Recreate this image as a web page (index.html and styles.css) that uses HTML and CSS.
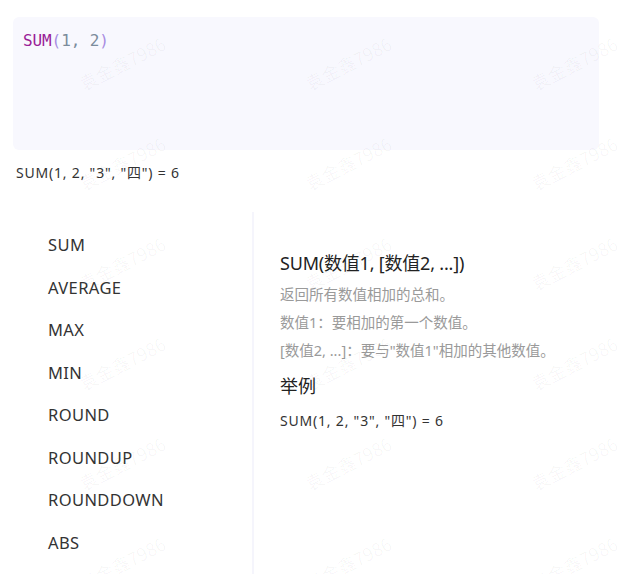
FILE: index.html
```html
<!DOCTYPE html>
<html lang="zh-CN">
<head>
<meta charset="utf-8">
<title>SUM</title>
<link rel="stylesheet" href="styles.css">
</head>
<body>
<div class="page">
  <div class="editor">
    <div class="code"><span class="fn">SUM</span><span class="paren">(</span><span class="arg">1, 2</span><span class="paren">)</span></div>
  </div>
  <div class="result">SUM(1, 2, "3", "四") = 6</div>
  <div class="panel">
    <ul class="fn-list">
      <li>SUM</li>
      <li>AVERAGE</li>
      <li>MAX</li>
      <li>MIN</li>
      <li>ROUND</li>
      <li>ROUNDUP</li>
      <li>ROUNDDOWN</li>
      <li>ABS</li>
    </ul>
    <div class="doc">
      <div class="doc-title">SUM(数值1, [数值2, ...])</div>
      <div class="doc-line first">返回所有数值相加的总和。</div>
      <div class="doc-line">数值1：要相加的第一个数值。</div>
      <div class="doc-line">[数值2, ...]：要与"数值1"相加的其他数值。</div>
      <div class="doc-sub">举例</div>
      <div class="doc-example">SUM(1, 2, "3", "四") = 6</div>
    </div>
  </div>
  <div class="watermark" aria-hidden="true">
    <span>袁金鑫7986</span><span>袁金鑫7986</span><span>袁金鑫7986</span>
    <span>袁金鑫7986</span><span>袁金鑫7986</span><span>袁金鑫7986</span>
    <span>袁金鑫7986</span><span>袁金鑫7986</span><span>袁金鑫7986</span>
    <span>袁金鑫7986</span><span>袁金鑫7986</span><span>袁金鑫7986</span>
    <span>袁金鑫7986</span><span>袁金鑫7986</span><span>袁金鑫7986</span>
    <span>袁金鑫7986</span><span>袁金鑫7986</span><span>袁金鑫7986</span>
  </div>
</div>
</body>
</html>
```

FILE: styles.css
```css
* { box-sizing: border-box; }
html, body {
  margin: 0;
  padding: 0;
  background: #ffffff;
}
body {
  font-family: "Noto Sans", "Noto Sans CJK SC", sans-serif;
  color: #333333;
  overflow: hidden;
}
.page {
  position: relative;
  width: 621px;
  height: 574px;
  overflow: hidden;
}
.editor {
  margin: 17px 22px 0 13px;
  height: 133px;
  background: #f8f8fe;
  border-radius: 6px;
  padding: 13px 0 0 10px;
}
.code {
  font-family: "DejaVu Sans Mono", monospace;
  font-size: 16px;
  line-height: 22px;
  letter-spacing: -0.1px;
}
.fn { color: #9a2197; }
.paren { color: #a98de2; }
.arg { color: #7b8c9c; }
.result {
  margin: 13px 0 0 16px;
  font-size: 14px;
  line-height: 20px;
  letter-spacing: 0.8px;
  color: #333333;
}
.panel {
  display: flex;
  margin-top: 29px;
  height: 400px;
}
.fn-list {
  list-style: none;
  margin: 0;
  padding: 12px 0 0 48px;
  width: 254px;
  border-right: 2px solid #f5f5fc;
}
.fn-list li {
  height: 42.5px;
  line-height: 42.5px;
  font-size: 16.5px;
  letter-spacing: 0.4px;
  color: #333333;
}
.doc {
  padding: 38px 0 0 26px;
}
.doc-title {
  font-size: 18px;
  line-height: 26px;
  color: #222222;
  letter-spacing: -0.2px;
}
.doc-line {
  font-size: 14.5px;
  line-height: 28px;
  color: #9a9a9a;
}
.doc-line.first { margin-top: 4px; }
.doc-sub {
  margin-top: 9px;
  font-size: 18px;
  line-height: 26px;
  color: #222222;
}
.doc-example {
  margin-top: 12px;
  font-size: 14px;
  line-height: 20px;
  letter-spacing: 0.8px;
  color: #333333;
}
.watermark {
  position: absolute;
  inset: 0;
  pointer-events: none;
  display: grid;
  grid-template-columns: repeat(3, 226px);
  grid-auto-rows: 100px;
  padding: 13px 0 0 9px;
}
.watermark span {
  display: flex;
  align-items: center;
  justify-content: center;
  font-family: "Noto Sans CJK SC", sans-serif;
  font-size: 18px;
  color: rgba(0, 0, 0, 0.035);
  transform: rotate(-27deg);
  white-space: nowrap;
}
```
